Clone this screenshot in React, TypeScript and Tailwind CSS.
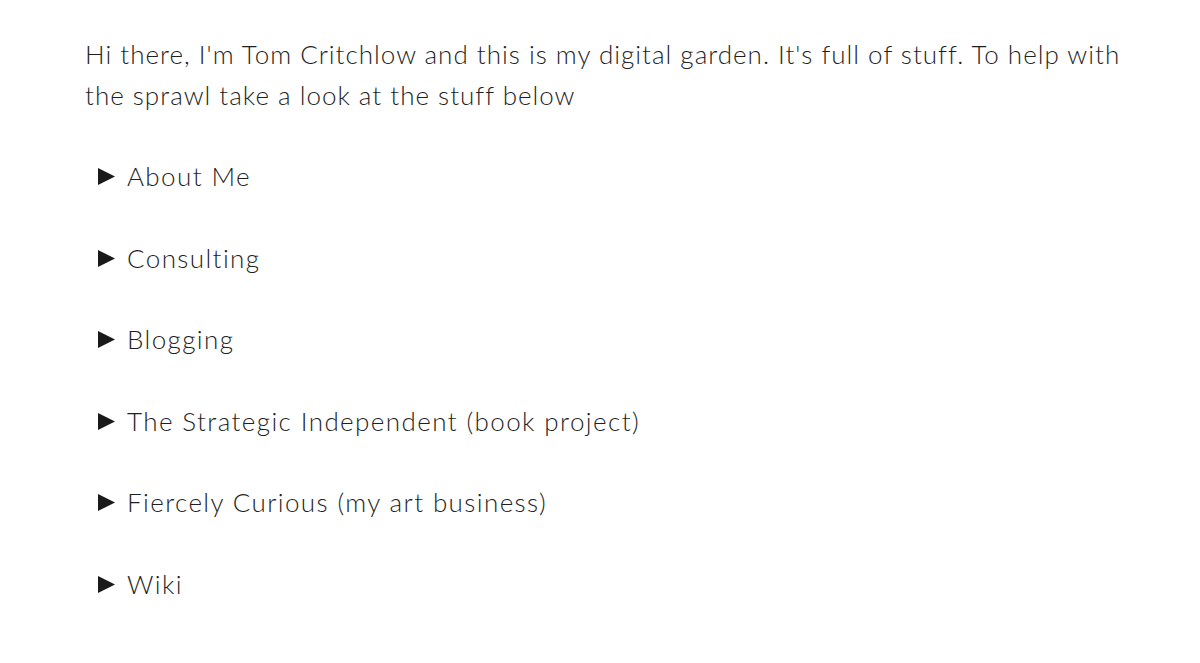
import React from 'react';

const sections = [
  'About Me',
  'Consulting',
  'Blogging',
  'The Strategic Independent (book project)',
  'Fiercely Curious (my art business)',
  'Wiki',
];

const App: React.FC = () => {
  return (
    <div className="min-h-screen bg-white text-[#1f1f1f] font-['Lato','Liberation_Sans',sans-serif] font-light">
      <div className="pl-[85px] pr-[40px] pt-[34px]">
        <p className="text-[26px] leading-[41px] tracking-[1px] mb-[40px]">
          Hi there, I'm Tom Critchlow and this is my digital garden. It's full of stuff. To help with
          <br />
          the sprawl take a look at the stuff below
        </p>

        <div className="flex flex-col gap-[40.5px]">
          {sections.map((label) => (
            <details key={label} className="pl-[12px]">
              <summary className="list-none cursor-pointer flex items-center text-[26px] leading-[41px] tracking-[1.4px]">
                <svg width="19" height="19" viewBox="0 0 19 19" className="mr-[11px] shrink-0">
                  <path d="M1 1 L18 9.5 L1 18 Z" fill="#1a1a1a" />
                </svg>
                {label}
              </summary>
            </details>
          ))}
        </div>
      </div>
    </div>
  );
};

export default App;
